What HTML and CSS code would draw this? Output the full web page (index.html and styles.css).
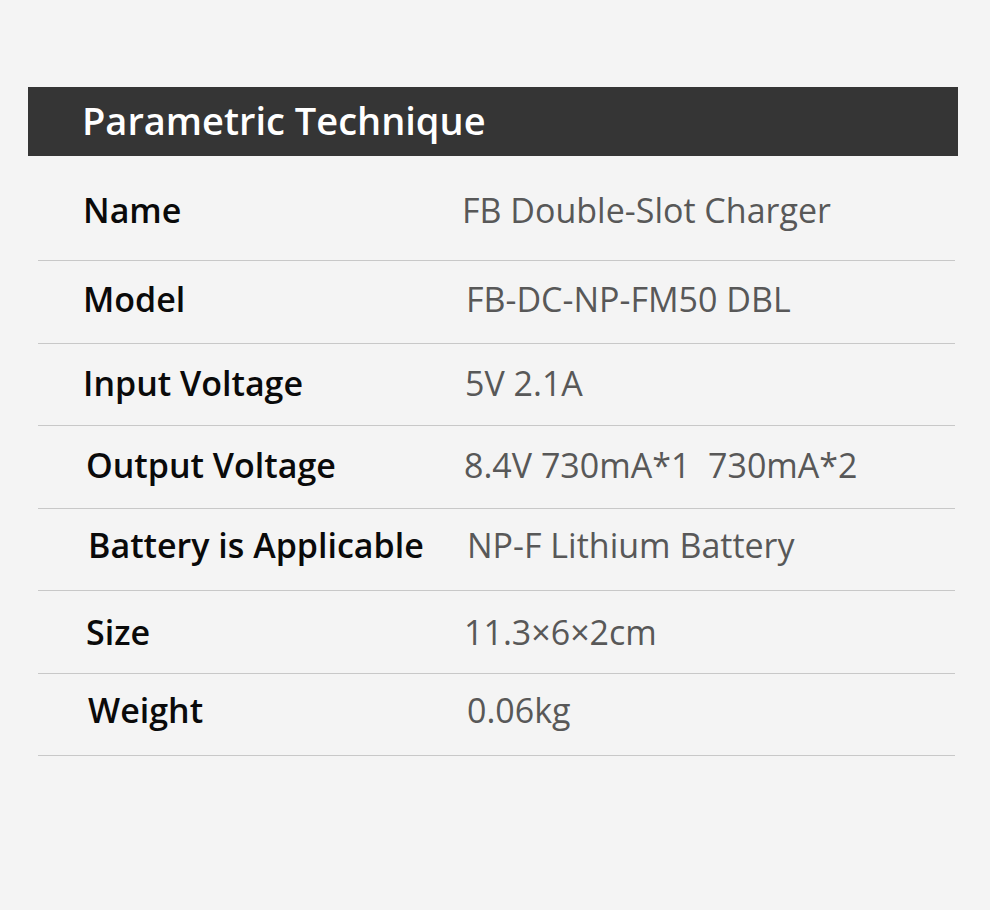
FILE: index.html
```html
<!DOCTYPE html>
<html lang="en">
<head>
<meta charset="utf-8">
<title>Parametric Technique</title>
<link rel="stylesheet" href="styles.css">
</head>
<body>
<main class="page">
  <header class="title-bar">
    <h1 class="title">Parametric Technique</h1>
  </header>
  <div class="spec-table">
    <div class="spec-row spec-row--first">
      <div class="spec-label">Name</div>
      <div class="spec-value">FB Double-Slot Charger</div>
    </div>
    <div class="spec-row raise-3">
      <div class="spec-label">Model</div>
      <div class="spec-value shift-4">FB-DC-NP-FM50 DBL</div>
    </div>
    <div class="spec-row raise-2 short">
      <div class="spec-label">Input Voltage</div>
      <div class="spec-value shift-3">5V 2.1A</div>
    </div>
    <div class="spec-row raise-2">
      <div class="spec-label shift-3">Output Voltage</div>
      <div class="spec-value shift-2">8.4V 730mA*1&nbsp; 730mA*2</div>
    </div>
    <div class="spec-row raise-5 short">
      <div class="spec-label shift-5">Battery is Applicable</div>
      <div class="spec-value shift-5">NP-F Lithium Battery</div>
    </div>
    <div class="spec-row">
      <div class="spec-label shift-3">Size</div>
      <div class="spec-value shift-2">11.3×6×2cm</div>
    </div>
    <div class="spec-row raise-5 short">
      <div class="spec-label shift-5">Weight</div>
      <div class="spec-value shift-5">0.06kg</div>
    </div>
  </div>
</main>
</body>
</html>
```

FILE: styles.css
```css
html, body {
  margin: 0;
  padding: 0;
  background: #f4f4f4;
}

body {
  font-family: "Open Sans", "Noto Sans", sans-serif;
  width: 990px;
  height: 910px;
  overflow: hidden;
}

.page {
  padding: 87px 32px 0 28px;
}

.title-bar {
  background: #353535;
  height: 69px;
  box-sizing: border-box;
  padding: 0 0 3px 54px;
  display: flex;
  align-items: center;
}

.title {
  margin: 0;
  color: #ffffff;
  font-size: 38px;
  font-weight: 600;
  line-height: 1;
}

.spec-table {
  margin: 0 3px 0 10px;
}

.spec-row {
  display: flex;
  align-items: center;
  height: 83px;
  box-sizing: border-box;
  border-bottom: 1px solid #c8c8c8;
}

.spec-row.short {
  height: 82px;
}

.spec-row--first {
  height: 105px;
  padding-top: 3px;
}

.raise-2 { padding-bottom: 4px; }
.raise-3 { padding-bottom: 6px; }
.raise-5 { padding-bottom: 9px; }

.spec-label {
  width: 424px;
  padding-left: 45px;
  box-sizing: border-box;
  color: #0a0a0a;
  font-size: 34px;
  font-weight: 600;
}

.spec-value {
  color: #585858;
  font-size: 34px;
  font-weight: 400;
}

.shift-2 { margin-left: 2px; }
.shift-3 { margin-left: 3px; }
.shift-4 { margin-left: 4px; }
.shift-5 { margin-left: 5px; }

.spec-label.shift-3 { padding-left: 48px; margin-left: 0; }
.spec-label.shift-5 { padding-left: 50px; margin-left: 0; }
```
